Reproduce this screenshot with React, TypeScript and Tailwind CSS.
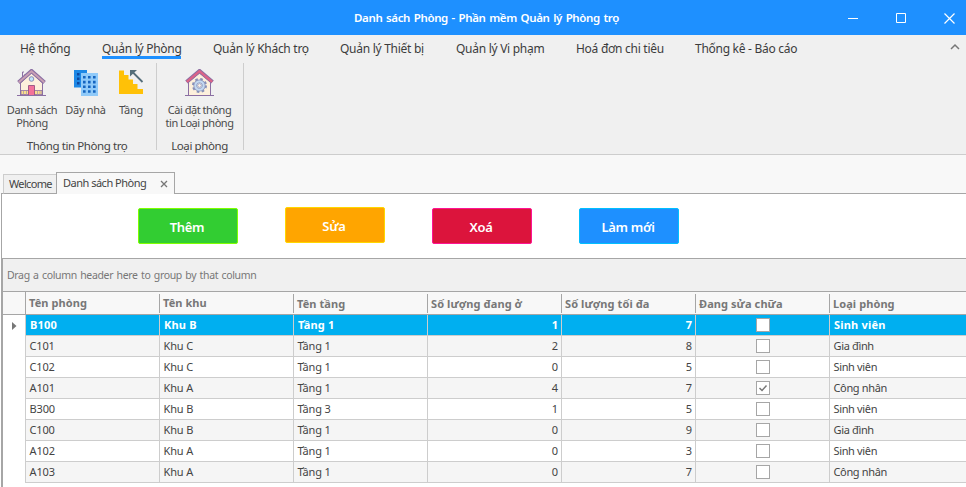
import React from 'react';
import clsx from 'clsx';

const HouseIcon = () => (
  <svg width="30" height="28" viewBox="0 0 30 28" fill="none">
    <path d="M5.5 13V3M7.5 9V5.5M5.5 3h1.5" stroke="#8b6fa3" strokeWidth="1" />
    <path d="M3.5 14 14.5 4l11 10v12h-22z" fill="#fdf0dc" stroke="#8b6fa3" />
    <path d="M4 21.5h21v4H4z" fill="#fbdf8c" stroke="#8b6fa3" strokeWidth=".8" />
    <path d="M6.5 22v3.500M9.500 22v3.500M20.500 22v3.500M23 22v3.500" stroke="#b09aa8" strokeWidth=".8" />
    <path d="M1.500 13.500 14.500 2l13 11.500" stroke="#8b6fa3" strokeWidth="4" />
    <path d="M1.800 13.200 14.500 2.300l12.700 10.900" stroke="#c9a0b4" strokeWidth="1.900" />
    <circle cx="14.500" cy="10" r="2.300" fill="#bfe3fa" stroke="#8b8fb8" />
    <path d="M11.500 26.500v-10h6v10z" fill="#f4729a" stroke="#a05c88" />
    <path d="M0 26.500h29" stroke="#8b6fa3" />
  </svg>
);

const BuildingIcon = () => (
  <svg width="24" height="26" viewBox="0 0 24 26">
    <path d="M0 0h13v17.500H0z" fill="#1e88e5" />
    <path d="M3 3h2.500v2.500H3zM3 7.500h2.500v2.500H3zM3 12h2.500v2.500H3z" fill="#0d47a1" />
    <path d="M7 3h17v23H7z" fill="#90caf9" />
    <path d="M9 6h2.600v2.600H9zM14 6h2.600v2.600H14zM19 6h2.600v2.600H19zM9 10.800h2.600v2.600H9zM14 10.800h2.600v2.600H14zM19 10.800h2.600v2.600H19zM9 15.500h2.600v2.600H9zM14 15.500h2.600v2.600H14zM19 15.500h2.600v2.600H19zM9 20.200h2.600v2.600H9zM14 20.200h2.600v2.600H14zM19 20.200h2.600v2.600H19z" fill="#1565c0" />
  </svg>
);

const StairsIcon = () => (
  <svg width="25" height="26" viewBox="0 0 25 26">
    <path d="M0 1.500h5v4.500h4.500v4.500H14V15h4.500v5H24v5H0z" fill="#ffc107" />
    <path d="M14 3.500 23.500 13" stroke="#546e7a" strokeWidth="1.800" />
    <path d="M11 1h7l-7 6.500z" fill="#546e7a" />
  </svg>
);

const HouseGearIcon = () => (
  <svg width="30" height="28" viewBox="0 0 30 28" fill="none">
    <path d="M3.500 13 14.500 4l11 9v13.500h-22z" fill="#fdf0dc" stroke="#8b6fa3" />
    <path d="M1.500 13 14.500 2l13 11" stroke="#8b6fa3" strokeWidth="4" />
    <path d="M1.800 12.800 14.500 2.200l12.700 10.600" stroke="#dc6488" strokeWidth="2.400" />
    <circle cx="14.500" cy="16.500" r="6.500" stroke="#8790b8" strokeWidth="2" strokeDasharray="2.600 2.500" />
    <circle cx="14.500" cy="16.500" r="4.300" fill="#fff" stroke="#8790b8" strokeWidth="3.600" />
    <circle cx="14.500" cy="16.500" r="4.200" stroke="#c3d9f1" strokeWidth="2.200" />
    <circle cx="14.500" cy="16.500" r="1.900" fill="#fdf3e6" stroke="#8790b8" strokeWidth=".8" />
    <path d="M0 26.500h29" stroke="#8b6fa3" />
  </svg>
);

const menu = [
  { label: 'Hệ thống', w: 'w-[50px]' },
  { label: 'Quản lý Phòng', w: 'w-[79px]', active: true },
  { label: 'Quản lý Khách trọ', w: 'w-[95px]' },
  { label: 'Quản lý Thiết bị', w: 'w-[84px]' },
  { label: 'Quản lý Vi phạm', w: 'w-[88px]' },
  { label: 'Hoá đơn chi tiêu', w: 'w-[87px]' },
  { label: 'Thống kê - Báo cáo', w: 'w-[104px]' },
];

const buttons = [
  { label: 'Thêm', cls: 'mt-[14px] bg-[#32cd32] border-[#7fff00]' },
  { label: 'Sửa', cls: 'mt-[13px] bg-[#ffa500] border-[#ffd700]' },
  { label: 'Xoá', cls: 'mt-[14px] bg-[#dc143c] border-[#ff1493]' },
  { label: 'Làm mới', cls: 'mt-[14px] bg-[#1e90ff] border-[#00bfff]' },
];

const headers = ['Tên phòng', 'Tên khu', 'Tên tầng', 'Số lượng đang ở', 'Số lượng tối đa', 'Đang sửa chữa', 'Loại phòng'];

const rows: [string, string, string, number, number, boolean, string][] = [
  ['B100', 'Khu B', 'Tầng 1', 1, 7, false, 'Sinh viên'],
  ['C101', 'Khu C', 'Tầng 1', 2, 8, false, 'Gia đình'],
  ['C102', 'Khu C', 'Tầng 1', 0, 5, false, 'Sinh viên'],
  ['A101', 'Khu A', 'Tầng 1', 4, 7, true, 'Công nhân'],
  ['B300', 'Khu B', 'Tầng 3', 1, 5, false, 'Sinh viên'],
  ['C100', 'Khu B', 'Tầng 1', 0, 9, false, 'Gia đình'],
  ['A102', 'Khu A', 'Tầng 1', 0, 3, false, 'Sinh viên'],
  ['A103', 'Khu A', 'Tầng 1', 0, 7, false, 'Công nhân'],
];

const columns = 'grid grid-cols-[23px_134px_134px_134px_134px_134px_134px_136px]';

function Tool({ icon, lines, cls }: { icon: React.ReactNode; lines: string[]; cls: string }) {
  return (
    <div className={clsx('flex flex-col items-center whitespace-nowrap text-[11px] leading-[13px] text-[#4b4b4b]', cls)}>
      <div className="flex h-[34px] shrink-0 items-start">{icon}</div>
      <p className="text-center">
        {lines.map((l, i) => (
          <React.Fragment key={l}>
            {i > 0 && <br />}
            {l}
          </React.Fragment>
        ))}
      </p>
    </div>
  );
}

export default function App() {
  return (
    <div className="h-[487px] w-[966px] overflow-hidden bg-white font-['Noto_Sans','DejaVu_Sans',sans-serif] text-[#444]">
      <header className="flex h-[35px] items-center bg-[#1e90ff] text-white">
        <h1 className="ml-[354px] w-[263px] whitespace-nowrap pt-px text-[11.5px] font-semibold tracking-[-0.36px] [word-spacing:1px]">Danh sách Phòng - Phần mềm Quản lý Phòng trọ</h1>
        <div className="ml-[231px] flex gap-[38px]">
          <svg width="10" height="12" viewBox="0 0 10 12"><path d="M0 6.500h10" stroke="#fff" /></svg>
          <svg width="10" height="12" viewBox="0 0 10 12" fill="none"><path d="M.5 1.500h9v9h-9z" stroke="#fff" /></svg>
          <svg width="11" height="12" viewBox="0 0 11 12"><path d="m.5 1.500 10 10m0-10-10 10" stroke="#fff" strokeWidth="1.200" /></svg>
        </div>
      </header>

      <section className="h-[120px] border-b border-[#cdcdcd] bg-[#f0f0f0]">
        <nav className="flex h-7 gap-8 pl-5 text-[12px] tracking-[-0.28px] text-[#3c3c3c]">
          {menu.map((m) => (
            <div key={m.label} className={clsx('mt-[5px] h-[19px] whitespace-nowrap leading-[17px]', m.w, m.active && 'border-b-[3px] border-[#1e90ff]')}>
              {m.label}
            </div>
          ))}
          <svg className="ml-auto mr-[6px] mt-[8px]" width="10" height="8" viewBox="0 0 10 8" fill="none"><path d="m1 6 4-4 4 4" stroke="#777" strokeWidth="1.500" /></svg>
        </nav>
        <div className="flex h-[87px]">
          <div className="flex w-[157px] flex-col border-r border-[#cdcdcd] pt-[6px]">
            <div className="flex h-[71px] shrink-0">
              <Tool icon={<HouseIcon />} lines={['Danh sách', 'Phòng']} cls="ml-[6px] w-[52px] tracking-[-0.42px]" />
              <Tool icon={<div className="pt-[1px]"><BuildingIcon /></div>} lines={['Dãy nhà']} cls="ml-[7px] w-[41px] tracking-[-0.3px]" />
              <Tool icon={<StairsIcon />} lines={['Tầng']} cls="ml-[12px] w-[26px] tracking-[-0.2px]" />
            </div>
            <p className="-ml-[2px] h-[10px] text-center text-[11.500px] leading-[12px] tracking-[-0.42px]">Thông tin Phòng trọ</p>
          </div>
          <div className="flex w-[87px] flex-col border-r border-[#cdcdcd] pt-[6px]">
            <div className="flex h-[71px] shrink-0 justify-center">
              <Tool icon={<HouseGearIcon />} lines={['Cài đặt thông', 'tin Loại phòng']} cls="w-[68px] pr-px tracking-[-0.47px]" />
            </div>
            <p className="h-[10px] pr-px text-center text-[11.500px] leading-[12px] tracking-[-0.4px]">Loại phòng</p>
          </div>
        </div>
      </section>

      <div className="flex h-[39px] items-end bg-[#f8f8f8] text-[11px]">
        <div className="h-full w-[1px] shrink-0" />
        <div className="w-[2px] shrink-0 self-end border-b border-[#a6a6a6]" />
        <div className="flex h-[20px] w-[53px] items-center border border-r-0 border-[#cdcdcd] border-b-[#a6a6a6] bg-[#f0f0f0] pl-[5px] tracking-[-0.65px]">Welcome</div>
        <div className="flex h-[22px] w-[119px] items-center border border-b-0 border-[#a6a6a6] pl-[6px]">
          <span className="w-[97px] tracking-[-0.5px]">Danh sách Phòng</span>
          <svg width="8" height="8" viewBox="0 0 8 8"><path d="m1 1 6 6m0-6-6 6" stroke="#777" strokeWidth="1.300" /></svg>
        </div>
        <div className="h-px flex-1 bg-[#a6a6a6]" />
      </div>

      <div className="ml-px flex h-[64px] gap-[47px] border-l border-[#a6a6a6] pl-[136px]">
        {buttons.map((b) => (
          <button key={b.label} className={clsx('flex h-[36px] w-[100px] items-center justify-center rounded-[2px] border pr-[2px] pt-[3px] text-[13px] font-semibold tracking-[-0.3px] text-white', b.cls)}>
            {b.label}
          </button>
        ))}
      </div>

      <main className="ml-px h-[229px] border-l-2 border-t border-[#a6a6a6]">
        <div className="flex h-[33px] items-center border-b border-[#a6a6a6] bg-[#f0f0f0] pl-[4px] pt-[2px] text-[10.5px] tracking-[-0.35px] text-[#777] [word-spacing:1px]">
          Drag a column header here to group by that column
        </div>
        <div className={clsx(columns, 'h-[23px] border-b border-[#a6a6a6] bg-[#f8f8f8] text-[11px] font-bold tracking-[0.08px] text-[#777]')}>
          <div className="border-r border-[#a6a6a6]" />
          {headers.map((h, i) => (
            <div key={h} className={clsx('mb-[2px] mt-[2px] whitespace-nowrap border-[#a6a6a6] pl-[3px] leading-[18px]', i < 6 && 'border-r', i > 1 && 'pt-[1px]')}>
              {h}
            </div>
          ))}
        </div>
        {rows.map((r, ri) => (
          <div key={ri} className={clsx(columns, 'h-[21px] text-[11px] leading-[20px]', ri === 0 && 'font-bold text-white')}>
            <div className="flex items-center justify-center border-r border-[#cdcdcd]">
              {ri === 0 && <svg width="5" height="8" viewBox="0 0 5 8"><path d="M0 0v8l4.500-4z" fill="#777" /></svg>}
            </div>
            {r.map((c, ci) => (
              <div
                key={ci}
                className={clsx(
                  'border-b border-[#cdcdcd]',
                  ci < 6 && 'border-r',
                  ri === 0 ? 'bg-[#00aff0]' : ri % 2 ? 'bg-[#f5f5f5]' : 'bg-white',
                  typeof c === 'number' && 'pr-[3px] text-right',
                  typeof c === 'string' && (ri === 0 ? 'pl-[4px] tracking-[0.2px]' : ci === 6 ? 'pl-[3.5px] tracking-[-0.35px]' : 'pl-[3.5px] tracking-[-0.15px]'),
                )}
              >
                {typeof c === 'boolean' ? (
                  <div className="mx-auto mt-[3px] flex h-[14px] w-[14px] items-center justify-center border border-[#a6a6a6] bg-white">
                    {c && <svg width="10" height="8" viewBox="0 0 10 8" fill="none"><path d="m1.500 4 2.500 2.500L8.500 1.500" stroke="#777" strokeWidth="1.500" /></svg>}
                  </div>
                ) : (
                  c
                )}
              </div>
            ))}
          </div>
        ))}
      </main>
    </div>
  );
}
